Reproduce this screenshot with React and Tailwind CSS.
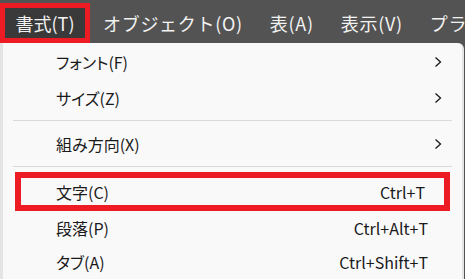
import React from "react";

const jp = { fontFamily: '"Noto Sans CJK JP", "Noto Sans", sans-serif' };

function Chevron() {
  return (
    <svg width="8" height="12" viewBox="0 0 8 12" className="shrink-0">
      <path d="M1.5 1.5 L6.5 6 L1.5 10.5" fill="none" stroke="#1a1a1a" strokeWidth="1.3" />
    </svg>
  );
}

function Item({ label, shortcut, sub, h = "h-[36px]" }) {
  return (
    <div className={`flex items-center ${h} pl-[53px] pr-[20px] text-[16px] text-[#1a1a1a]`}>
      <span className="flex-1">{label}</span>
      {shortcut && <span className="pr-[14px]">{shortcut}</span>}
      {sub && <Chevron />}
    </div>
  );
}

function Separator() {
  return <div className="mx-[10px] mt-[4px] mb-[5px] h-px bg-[#d9d9d9]" />;
}

export default function App() {
  return (
    <div className="w-[465px] h-[279px] bg-[#535353] overflow-hidden" style={jp}>
      <div className="flex items-start h-[43px] text-[18px] text-[#f2f2f2] overflow-hidden">
        <div className="mt-[3px] h-[40px] w-[90px] shrink-0 border-[5px] border-[#ed1c24] bg-[#3a3a3a] flex items-center justify-center [font-feature-settings:'palt']">
          書式(T)
        </div>
        <div className="flex h-[43px] items-center gap-[27px] pl-[13px] pt-[3px] whitespace-nowrap tracking-[0.7px]">
          <span>オブジェクト(O)</span>
          <span>表(A)</span>
          <span>表示(V)</span>
          <span>プラ</span>
        </div>
      </div>
      <div className="w-[464px] h-[236px] bg-[#f9f9f9] border-l-[3px] border-r-[2px] border-[#e4e4e4] rounded-tr-[6px] pt-[1px] [font-feature-settings:'palt']">
        <Item label="フォント(F)" sub />
        <Item label="サイズ(Z)" sub />
        <Separator />
        <Item label="組み方向(X)" sub />
        <Separator />
        <div className="mx-[12px] border-[6px] border-[#ed1c24] h-[39px] flex items-center pl-[35px] pr-[19px] text-[16px] text-[#1a1a1a]">
          <span className="flex-1">文字(C)</span>
          <span>Ctrl+T</span>
        </div>
        <Item label="段落(P)" shortcut="Ctrl+Alt+T" h="h-[34px]" />
        <Item label="タブ(A)" shortcut="Ctrl+Shift+T" h="h-[34px]" />
      </div>
    </div>
  );
}
